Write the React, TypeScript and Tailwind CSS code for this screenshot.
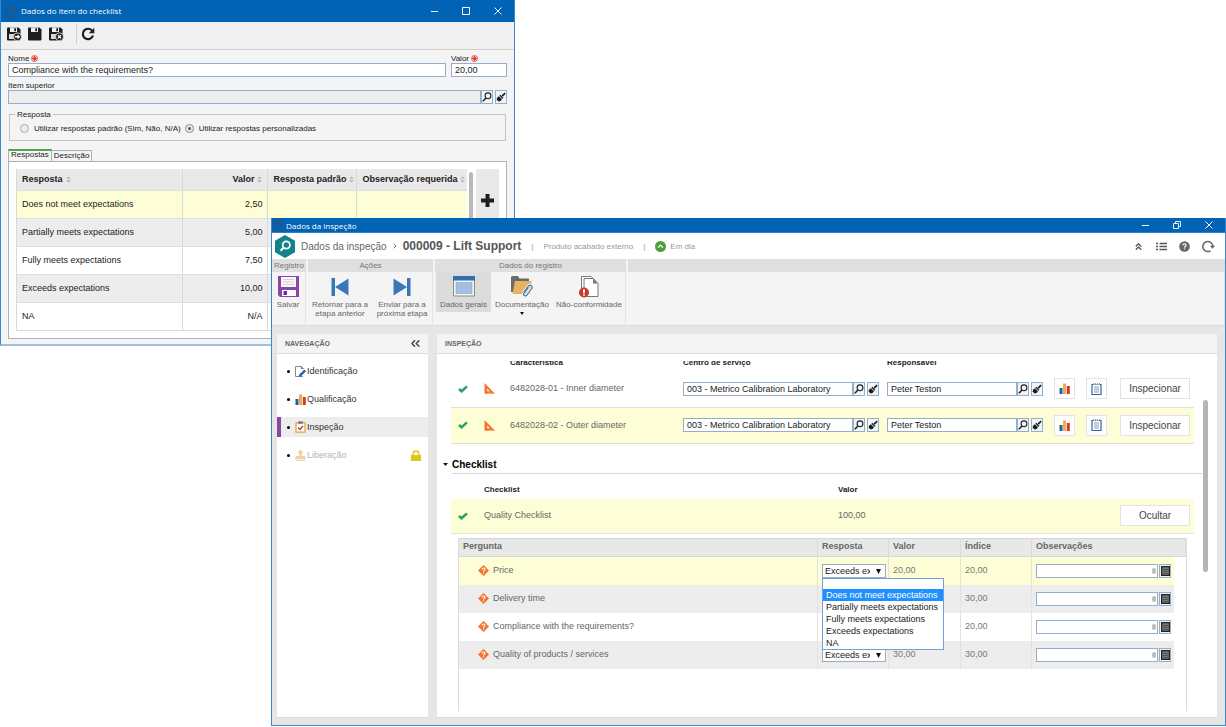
import { ReactNode } from 'react';
import { ChevronsUp, ChevronRight } from 'lucide-react';

const answers = [
  { name: 'Does not meet expectations', value: '2,50' },
  { name: 'Partially meets expectations', value: '5,00' },
  { name: 'Fully meets expectations', value: '7,50' },
  { name: 'Exceeds expectations', value: '10,00' },
  { name: 'NA', value: 'N/A' }
];

const measurements = [
  { name: '6482028-01 - Inner diameter', center: '003 - Metrico Calibration Laboratory', owner: 'Peter Teston' },
  { name: '6482028-02 - Outer diameter', center: '003 - Metrico Calibration Laboratory', owner: 'Peter Teston' }
];

const questions = [
  { name: 'Price', value: '20,00', index: '20,00' },
  { name: 'Delivery time', value: '30,00', index: '30,00' },
  { name: 'Compliance with the requirements?', value: '20,00', index: '20,00' },
  { name: 'Quality of products / services', value: '30,00', index: '30,00' }
];

const rowColors = ['bg-[#fefed6]', 'bg-[#ededed]', 'bg-white', 'bg-[#ededed]', 'bg-white'];

/* ---------- Icons ---------- */

const PageIcon = () => (
  <svg className="w-2 h-[11px] shrink-0" viewBox="0 0 8 11" fill="none" stroke="#3d4f63">
    <path d="M.5.5h4.500l2.500 2.500v7.500h-7zM5 .5V3h2.500" />
  </svg>
);

const FloppyIcon = ({ badge }: { badge?: 'arrow' | 'close' }) => (
  <svg className="w-[15px] h-[14px]" viewBox="0 0 15 14">
    <path d="M0 1.500Q0 .5 1 .5h10.500L13.500 2.500v10q0 1-1 1H1q-1 0-1-1z" fill="#1e1e1e" />
    <path d="M3 .5h7v4.500H3z" fill="#f0f0f0" />
    <path d="M7.300 1.300h1.700v3H7.300z" fill="#1e1e1e" />
    {badge && <path d="M2 7h6v5H2z" fill="#d8d8d8" />}
    {badge && <circle cx="10.500" cy="9.800" r="4" fill="#1e1e1e" stroke="#f0f0f0" strokeWidth=".8" />}
    {badge === 'arrow' && <path d="M8 9h2.500V7.300L13.200 9.800l-2.700 2.500v-1.700H8z" fill="#fff" />}
    {badge === 'close' && <path d="M9 8.300l3 3m0-3l-3 3" stroke="#fff" strokeWidth="1.300" />}
  </svg>
);

const RequiredIcon = () => (
  <svg className="w-[7px] h-[7px]" viewBox="0 0 7 7" fill="none" stroke="#e8352c">
    <circle cx="3.500" cy="3.500" r="3" strokeWidth=".8" />
    <path d="M3.500 1v5M1 3.500h5M1.900 1.900l3.200 3.200M5.100 1.900L1.900 5.100" strokeWidth=".9" />
  </svg>
);

const SearchIcon = () => (
  <svg className="w-[10px] h-[10px]" viewBox="0 0 10 10" fill="none" stroke="#222">
    <circle cx="6" cy="3.800" r="2.900" strokeWidth="1.100" />
    <path d="M4 6L.8 9.200" strokeWidth="1.600" />
  </svg>
);

const BrushIcon = () => (
  <svg className="w-[10px] h-[10px]" viewBox="0 0 10 10" fill="#1c1c1c">
    <path d="M8.600.6l1.100 1.100L6.800 4.800 5.500 3.500z" />
    <path d="M4.300 2.700l3.200 3.200-1 .9L3.400 3.700z" />
    <path d="M2.900 4.200l3.100 3.100Q4.800 9.500 2.600 9.500L.5 7.600Q.8 5 2.900 4.200z" />
  </svg>
);

const SortIcon = () => (
  <svg className="w-[5px] h-[7px] shrink-0" viewBox="0 0 5 7" fill="#b5b5b5">
    <path d="M0 2.800L2.500.5 5 2.800zM0 4.200L2.500 6.500 5 4.200z" />
  </svg>
);

const SaveIcon = () => (
  <svg className="w-[21px] h-[21px]" viewBox="0 0 21 21">
    <path d="M0 0h21v21H2l-2-2z" fill="#8a45a8" />
    <path d="M3 1h15v10H3z" fill="#f7f7f7" />
    <path d="M5 3.500h11M5 6h11M5 8.500h11" stroke="#c9c9c9" strokeWidth=".8" />
    <path d="M4 14h14v6H4z" fill="#fff" />
    <path d="M5.500 15h3.500v4H5.500z" fill="#6d2e8c" />
  </svg>
);

const PreviousIcon = () => (
  <svg className="w-[18px] h-[21px]" viewBox="0 0 18 21" fill="#3a77b6">
    <path d="M.5 2H4v18H.5zM17.500 2.500v17L4 11z" />
  </svg>
);

const NextIcon = () => (
  <svg className="w-[18px] h-[21px]" viewBox="0 0 18 21" fill="#3a77b6">
    <path d="M14 2h3.500v18H14zM.5 2.500v17L14 11z" />
  </svg>
);

const FormIcon = () => (
  <svg className="w-[22px] h-[21px]" viewBox="0 0 22 21">
    <path d="M.5.500h21v19.500H.5z" fill="#f4f4f4" stroke="#8c8c8c" />
    <path d="M0 0h22v4.500H0z" fill="#2f6fb3" />
    <path d="M3 6.500h16v11H3z" fill="#a4bfdf" stroke="#7ea1cb" strokeWidth=".6" />
  </svg>
);

const FolderIcon = () => (
  <svg className="w-[22px] h-[21px]" viewBox="0 0 22 21">
    <path d="M0 1.500Q0 0 1.500 0H7l1.500 2.500H18V16H0z" fill="#6b6b6b" />
    <path d="M4 5h16.500l-1 13H1.500z" fill="#e9b25e" />
    <path d="M12.500 16.500l5-6.500q1.500-1.500 3 0t0 3l-5 6.500q-1 1-2.300 0t-.2-2.300l4.500-5.700" fill="none" stroke="#fff" strokeWidth="2.800" />
    <path d="M12.500 16.500l5-6.500q1.500-1.500 3 0t0 3l-5 6.500q-1 1-2.300 0t-.2-2.300l4.500-5.700" fill="none" stroke="#3a77b6" strokeWidth="1.200" />
  </svg>
);

const NonConformityIcon = () => (
  <svg className="w-[20px] h-[22px]" viewBox="0 0 20 22">
    <path d="M2.500 14V.5h9.500l4 4" fill="#fff" stroke="#777" />
    <path d="M5 20V2.500h9l5 5V20.500H5z" fill="#fff" stroke="#777" />
    <path d="M14 2.500v5h5z" fill="#777" />
    <circle cx="5" cy="16.500" r="5" fill="#c83a26" />
    <path d="M4.100 13.200h1.800v4H4.100zM4.100 18.200h1.800v1.600H4.100z" fill="#fff" />
  </svg>
);

const ChartIcon = () => (
  <svg className="w-[11px] h-[11px] shrink-0" viewBox="0 0 11 11">
    <path d="M.5 5h3v6h-3z" fill="#1d5ea8" />
    <path d="M4 .5h3V11H4z" fill="#eeaa4e" />
    <path d="M7.800 3h3v8h-3z" fill="#cc3d20" />
  </svg>
);

const NotepadIcon = () => (
  <svg className="w-[11px] h-[12px]" viewBox="0 0 11 12">
    <path d="M1 1.500h9v10H1z" fill="#fff" stroke="#2a68ad" strokeWidth="1.200" />
    <path d="M3 3h5v7H3z" fill="#c9ccd2" />
    <path d="M2 .8h7" stroke="#fff" strokeWidth="1.600" />
    <path d="M2 1h7" stroke="#777" strokeWidth="1.400" strokeDasharray="1 1" />
  </svg>
);

const CheckIcon = () => (
  <svg className="w-[10px] h-[8px]" viewBox="0 0 10 8">
    <path d="M1 4l2.600 2.300L9 1.400" fill="none" stroke="#2f9d6e" strokeWidth="2.600" />
  </svg>
);

const SetSquareIcon = () => (
  <svg className="w-[11px] h-[11px]" viewBox="0 0 11 11">
    <path fillRule="evenodd" d="M.5 0L11 10.800H.5zM3.200 5.600v2.700h2.600z" fill="#f2742e" />
    <path d="M4.500 10.800v-.9M6.500 10.800v-.9M8.500 10.800v-.9" stroke="#fff" strokeWidth=".5" />
  </svg>
);

const QuestionIcon = () => (
  <svg className="w-[11px] h-[11px] shrink-0" viewBox="0 0 11 11">
    <path d="M5.500 0L11 5.500 5.500 11 0 5.500z" fill="#f2742e" />
    <path d="M4 4.400Q4 3 5.500 3T7 4.300Q7 5 6.200 5.500T5.500 6.600" fill="none" stroke="#fff" strokeWidth="1.100" />
    <path d="M4.900 7.300h1.200v1.100H4.900z" fill="#fff" />
  </svg>
);

const EditPageIcon = () => (
  <svg className="w-[11px] h-[11px] shrink-0" viewBox="0 0 11 11">
    <path d="M8 10.500H.5V.5H6L8.500 3" fill="none" stroke="#888" />
    <path d="M6 0v3h3z" fill="#777" />
    <path d="M9.300 3.500L11 5.200 6 10.200l-2.300.6.600-2.300z" fill="#1f62b0" />
  </svg>
);

const ClipboardIcon = () => (
  <svg className="w-[11px] h-[12px] shrink-0" viewBox="0 0 11 12">
    <path d="M1 1.800h9v9.400H1z" fill="#fff" stroke="#e0a24a" strokeWidth="1.300" />
    <path d="M3.300.3h4.400v2.500H3.300z" fill="#777" />
    <path d="M3.200 6.500l1.800 2L8 4.800" fill="none" stroke="#c8321e" strokeWidth="1.300" />
  </svg>
);

const StampIcon = () => (
  <svg className="w-[11px] h-[11px] shrink-0" viewBox="0 0 11 11" fill="#f1d2a4">
    <circle cx="5.500" cy="2.200" r="2.200" />
    <path d="M4.500 4h2v2h3.200q1.300.3 1.300 3H0q0-2.700 1.300-3h3.200zM.8 9.700h9.400v1.300H.8z" />
  </svg>
);

const LockIcon = () => (
  <svg className="w-[10px] h-[11px]" viewBox="0 0 10 11">
    <path d="M2.200 5.500V3.500Q2.200 1 5 1t2.800 2.500v2" fill="none" stroke="#e0c70e" strokeWidth="1.500" />
    <path d="M0 5h10v6H0z" fill="#e0c70e" />
  </svg>
);

/* ---------- Shared controls ---------- */

const inputClass = 'block min-w-0 h-3.5 border border-[#93afca] px-[3px] text-[9px] leading-3 text-[#222]';

const radioClass =
  'appearance-none size-[9px] rounded-full border border-[#aaa] bg-[#ececec] checked:bg-[#555] checked:shadow-[inset_0_0_0_2px_#ececec]';

const SmallButton = ({ label, children }: { label: string; children: ReactNode }) => (
  <button aria-label={label} className="w-3 h-3.5 shrink-0 border border-[#93afca] bg-[#f1f4f8] flex items-center justify-center">
    {children}
  </button>
);

const Lookup = ({ label, value, disabled }: { label: string; value?: string; disabled?: boolean }) => (
  <div className="flex">
    <input
      aria-label={label}
      defaultValue={value}
      disabled={disabled}
      className={`${inputClass} flex-1 ${disabled ? 'bg-[#ededed]' : 'bg-white'}`}
    />
    <SmallButton label={`${label}: pesquisar`}><SearchIcon /></SmallButton>
    <div className="w-0.5" />
    <SmallButton label={`${label}: limpar`}><BrushIcon /></SmallButton>
  </div>
);

const WindowButtons = ({ restore }: { restore?: boolean }) => (
  <div className="flex items-center gap-6 mr-3">
    <button aria-label="Minimizar">
      <svg className="w-[7px] h-2" viewBox="0 0 7 8"><path d="M0 4.500h7" stroke="#fff" /></svg>
    </button>
    <button aria-label={restore ? 'Restaurar' : 'Maximizar'}>
      <svg className="w-2 h-2" viewBox="0 0 8 8" fill="none" stroke="#fff">
        {restore ? <path d="M.5 2.500h5v5h-5zM2.500 2V.5h5v5H6" strokeWidth=".9" /> : <path d="M.5.5h7v7h-7z" />}
      </svg>
    </button>
    <button aria-label="Fechar">
      <svg className="w-2 h-2" viewBox="0 0 8 8"><path d="M.5.5l7 7m0-7l-7 7" stroke="#fff" /></svg>
    </button>
  </div>
);

/* ---------- Checklist item window ---------- */

const HeaderCell = ({ label, right }: { label: string; right?: boolean }) => (
  <th className="border-r border-[#d9d9d9] px-[5px] font-bold last:border-r-0">
    <div className={`flex items-center gap-[3px] whitespace-nowrap ${right ? 'justify-end' : ''}`}>
      {label}
      <SortIcon />
    </div>
  </th>
);

const ItemWindow = () => (
  <section className="absolute left-0 top-0 w-[42%] bg-[#f4f4f4] border-x border-b-2 border-x-[#3c87c9] border-b-[#9cc1e4] text-[#222]">
    <div className="h-[22px] bg-[#0063b5] flex items-center justify-between pl-1.5">
      <div className="flex items-center gap-1.5 font-['Open_Sans',sans-serif] text-[8px] text-white">
        <PageIcon />
        <h1>Dados do item do checklist</h1>
      </div>
      <WindowButtons />
    </div>

    <div className="h-7 bg-[#f0f0f0] border-b border-[#cfcfcf] flex items-center pl-1.5 pb-1">
      <button aria-label="Salvar e sair"><FloppyIcon badge="arrow" /></button>
      <button aria-label="Salvar" className="ml-1.5"><FloppyIcon /></button>
      <button aria-label="Salvar e novo" className="ml-1.5"><FloppyIcon badge="close" /></button>
      <div className="w-px h-5 bg-[#cfcfcf] ml-3 mr-1" />
      <button aria-label="Atualizar">
        <svg className="w-[14px] h-[14px]" viewBox="0 0 14 14">
          <path d="M11 3.600A5.200 5.200 0 1 0 12 8.500" fill="none" stroke="#1e1e1e" strokeWidth="2.200" />
          <path d="M13.300.8v5.500H7.800z" fill="#1e1e1e" />
        </svg>
      </button>
    </div>

    <div className="px-[7px] pt-1 pb-[5px] text-[8px] leading-[9px]">
      <div className="flex gap-[5px]">
        <div className="flex-1">
          <label htmlFor="item-name" className="flex items-center gap-0.5">Nome <RequiredIcon /></label>
          <input id="item-name" defaultValue="Compliance with the requirements?" className={`${inputClass} w-full bg-white`} />
        </div>
        <div className="w-14">
          <label htmlFor="item-value" className="flex items-center gap-0.5">Valor <RequiredIcon /></label>
          <input id="item-value" defaultValue="20,00" className={`${inputClass} w-full bg-white`} />
        </div>
      </div>

      <p className="mt-1">Item superior</p>
      <Lookup label="Item superior" disabled />

      <fieldset className="mt-1.5 mx-px h-[31px] border border-[#c3c3c3] px-2.5">
        <legend className="px-0.5 ml-[-5px]">Resposta</legend>
        <div className="flex items-center h-[18px] gap-1">
          <label className="flex items-center gap-[5px] whitespace-nowrap">
            <input type="radio" name="answer-mode" className={radioClass} />
            Utilizar respostas padrão (Sim, Não, N/A)
          </label>
          <label className="flex items-center gap-[5px] whitespace-nowrap">
            <input type="radio" name="answer-mode" defaultChecked className={radioClass} />
            Utilizar respostas personalizadas
          </label>
        </div>
      </fieldset>

      <div role="tablist" className="flex items-end mt-2">
        <button role="tab" aria-selected="true" className="h-3 border-x border-t-2 border-x-[#a9b3b3] border-t-[#4ca64c] bg-[#f7f7f7] px-0.5 pb-0.5 leading-2">
          Respostas
        </button>
        <button role="tab" aria-selected="false" className="h-[11px] border-r border-t border-[#a9b3b3] px-0.5 leading-2">
          Descrição
        </button>
      </div>

      <div className="border border-[#a9b3b3] bg-white flex p-[7px] text-[9px]">
        <div className="flex-1">
          <table className="w-full border-collapse table-fixed border-l border-b border-[#d9d9d9]">
            <colgroup>
              <col />
              <col className="w-[85px]" />
              <col className="w-[89px]" />
              <col className="w-[110px]" />
            </colgroup>
            <thead>
              <tr className="h-[21px] bg-[#e9e9e9] text-left">
                <HeaderCell label="Resposta" />
                <HeaderCell label="Valor" right />
                <HeaderCell label="Resposta padrão" />
                <HeaderCell label="Observação requerida" />
              </tr>
            </thead>
            <tbody>
              {answers.map((answer, index) => (
                <tr key={answer.name} className={`h-7 border-t border-[#dedede] ${rowColors[index]}`}>
                  <td className="border-r border-[#d9d9d9] px-[5px]">{answer.name}</td>
                  <td className="border-r border-[#d9d9d9] px-[5px] text-right">{answer.value}</td>
                  <td className="border-r border-[#d9d9d9]"></td>
                  <td></td>
                </tr>
              ))}
            </tbody>
          </table>
        </div>
        <div className="w-1 ml-0.5 mt-[3px] rounded bg-[#b9b9b9]" />
        <div className="w-[23px] ml-[3px] bg-[#e9e9e9] pt-[25px] text-center">
          <button aria-label="Adicionar resposta">
            <svg className="w-[13px] h-[13px]" viewBox="0 0 13 13"><path d="M6.500 0v13M0 6.500h13" stroke="#1e1e1e" strokeWidth="4" /></svg>
          </button>
        </div>
      </div>
    </div>
  </section>
);

/* ---------- Inspection window ---------- */

const RibbonGroup = ({ title, className, children }: { title?: string; className: string; children?: ReactNode }) => (
  <div className={`flex flex-col ${className}`}>
    <h2 className="h-[13px] bg-[#dfdfdf] text-center text-[#777] leading-[13px]">{title}</h2>
    <div className="flex flex-1 border-r border-[#e2e2e2]">{children}</div>
  </div>
);

const RibbonButton = ({ icon, className, children }: { icon: ReactNode; className: string; children: ReactNode }) => (
  <button className={`flex flex-col items-center pt-1 ${className}`}>
    <span className="h-[22px]">{icon}</span>
    <span className="mt-0.5 whitespace-nowrap">{children}</span>
  </button>
);

const NavItem = ({ icon, label, active, locked }: { icon: ReactNode; label: string; active?: boolean; locked?: boolean }) => (
  <li className="h-7 py-1">
    <a
      href="#"
      className={`h-full flex items-center pr-[7px] border-l-4 ${active ? 'border-[#8a45a8] bg-[#ededed]' : 'border-transparent'} ${locked ? 'text-[#b5b5b5]' : 'text-[#333]'}`}
    >
      <span className="w-[3px] h-[3px] rounded-full bg-black ml-1.5 mr-[5px]" />
      {icon}
      <span className="ml-px flex-1">{label}</span>
      {locked && <LockIcon />}
    </a>
  </li>
);

const AnswerSelect = ({ question, open }: { question: string; open?: boolean }) => (
  <div className="relative">
    <select
      aria-label={`Resposta para ${question}`}
      defaultValue="Exceeds expectations"
      className="block appearance-none w-16 h-3.5 border border-[#93afca] bg-white pl-0.5 pr-[15px] text-[9px] leading-3 text-[#222]"
    >
      {answers.map((answer) => (
        <option key={answer.name}>{answer.name}</option>
      ))}
    </select>
    <svg className="absolute left-[54px] top-[5px] w-[5px] h-[5px] pointer-events-none" viewBox="0 0 5 5"><path d="M0 0h5L2.500 5z" fill="#111" /></svg>
    {open && (
      <ul role="listbox" className="absolute left-0 top-3.5 z-10 w-[122px] border border-[#6f9fdc] bg-white pt-2.5 text-[9px] leading-3 text-[#222]">
        {answers.map((answer, index) => (
          <li
            key={answer.name}
            role="option"
            aria-selected={index === 0}
            className={`px-[3px] whitespace-nowrap ${index === 0 ? 'bg-[#1e90ff] text-white' : ''}`}
          >
            {answer.name}
          </li>
        ))}
      </ul>
    )}
  </div>
);

const MeasurementTable = () => (
  <table className="w-full table-fixed border-collapse text-[#666]">
    <colgroup>
      <col className="w-[33px]" />
      <col className="w-[26px]" />
      <col />
      <col className="w-[204px]" />
      <col className="w-[167px]" />
      <col className="w-[32px]" />
      <col className="w-[34px]" />
      <col className="w-[74px]" />
    </colgroup>
    <thead>
      <tr className="h-[18px] text-left text-[8px] leading-[9px] text-[#222]">
        <th></th>
        <th></th>
        <th>Característica</th>
        <th>Centro de serviço</th>
        <th>Responsável</th>
        <th></th>
        <th></th>
        <th></th>
      </tr>
    </thead>
    <tbody>
      {measurements.map((item, index) => (
        <tr key={item.name} className={`h-9 border-b border-[#e0e0e0] ${index === 1 ? 'bg-[#fefed6]' : ''}`}>
          <td className="pl-[7px]"><CheckIcon /></td>
          <td><SetSquareIcon /></td>
          <td>{item.name}</td>
          <td className="pr-2"><Lookup label="Centro de serviço" value={item.center} /></td>
          <td className="pr-[11px]"><Lookup label="Responsável" value={item.owner} /></td>
          <td>
            <button aria-label="Gráfico" className="size-[21px] border border-[#e3e3e3] bg-white flex items-center justify-center"><ChartIcon /></button>
          </td>
          <td>
            <button aria-label="Anotações" className="size-[21px] border border-[#e3e3e3] bg-white flex items-center justify-center"><NotepadIcon /></button>
          </td>
          <td className="pr-1">
            <button className="w-full h-[21px] border border-[#e3e3e3] bg-white text-[10px] text-[#444]">Inspecionar</button>
          </td>
        </tr>
      ))}
    </tbody>
  </table>
);

const QuestionTable = () => (
  <table className="w-full table-fixed border-collapse text-[#777]">
    <colgroup>
      <col />
      <col className="w-[71px]" />
      <col className="w-[72px]" />
      <col className="w-[71px]" />
      <col className="w-[143px]" />
      <col className="w-[11px]" />
    </colgroup>
    <thead>
      <tr className="h-[18px] bg-[#e8e8e8] border-y border-[#d6d6d6] text-left text-[#666] [&>th]:pl-1 [&>th]:pb-0.5 [&>th]:border-r [&>th]:border-[#dcdcdc]">
        <th>Pergunta</th>
        <th>Resposta</th>
        <th>Valor</th>
        <th>Índice</th>
        <th colSpan={2}>Observações</th>
      </tr>
    </thead>
    <tbody>
      {questions.map((question, index) => (
        <tr key={question.name} className={`h-7 [&>td]:pl-1 ${rowColors[index]}`}>
          <td className="border-r border-[#e2e2e2]">
            <div className="flex items-center gap-1 pl-[15px] text-[#666]">
              <QuestionIcon />
              {question.name}
            </div>
          </td>
          <td className="border-r border-[#e2e2e2]"><AnswerSelect question={question.name} open={index === 0} /></td>
          <td className="border-r border-[#e2e2e2]">{question.value}</td>
          <td className="border-r border-[#e2e2e2]">{question.index}</td>
          <td>
            <div className="flex pr-[3px]">
              <div className="relative flex-1 mr-px">
                <input aria-label={`Observações de ${question.name}`} className={`${inputClass} w-full bg-white`} />
                <span className="absolute right-0.5 top-1 w-1 h-1.5 rounded-sm bg-[#bdbdbd]" />
              </div>
              <SmallButton label="Editar observações">
                <svg className="w-[9px] h-[10px]" viewBox="0 0 9 10">
                  <path d="M.5.5h8v9h-8z" fill="#777" stroke="#222" strokeWidth="1.400" />
                  <path d="M2 3.500h5M2 5.500h5M2 7.500h5" stroke="#444" strokeWidth=".7" />
                </svg>
              </SmallButton>
            </div>
          </td>
          <td className="bg-white"></td>
        </tr>
      ))}
    </tbody>
  </table>
);

const InspectionWindow = () => (
  <section className="relative ml-[271px] mt-[218px] mb-px flex-1 flex flex-col border-x border-b border-[#3c87c9] bg-[#e6e6e6] text-[9px] leading-[11px]">
    <div className="h-[15px] bg-[#0063b5] border-b border-[#2f7fd0] flex items-center justify-between pl-0.5">
      <div className="flex items-center gap-1 font-['Open_Sans',sans-serif] text-[8px] text-white">
        <PageIcon />
        <h1>Dados da inspeção</h1>
      </div>
      <WindowButtons restore />
    </div>

    <header className="h-[26px] bg-white flex items-center pl-[3px] pr-2.5 text-[8px] text-[#999]">
      <svg className="w-5 h-[23px]" viewBox="0 0 20 23">
        <path d="M10 0l10 5.700v11.600L10 23 0 17.300V5.700z" fill="#12838a" />
        <circle cx="11.300" cy="10" r="3.600" fill="none" stroke="#fff" strokeWidth="1.700" />
        <path d="M8.800 12.500L5.600 15.700" stroke="#fff" strokeWidth="2" />
      </svg>
      <span className="ml-1.5 text-[10px] text-[#666]">Dados da inspeção</span>
      <ChevronRight className="size-2 mx-1 text-[#777]" strokeWidth={3} />
      <span className="text-xs font-bold text-[#555]">000009 - Lift Support</span>
      <span className="mx-2.5">|</span>
      <span>Produto acabado externo</span>
      <span className="mx-2.5">|</span>
      <svg className="w-[11px] h-[11px] mr-1" viewBox="0 0 11 11">
        <circle cx="5.500" cy="5.500" r="5.500" fill="#4ba03c" />
        <path d="M3 6.700l2.500-2.500L8 6.700" fill="none" stroke="#fff" strokeWidth="1.200" />
      </svg>
      <span className="flex-1">Em dia</span>
      <div className="flex items-center gap-3 text-[#555]">
        <button aria-label="Recolher"><ChevronsUp className="size-[11px]" strokeWidth={3} /></button>
        <button aria-label="Lista">
          <svg className="w-[11px] h-[9px]" viewBox="0 0 11 9"><path d="M0 1.500h2M0 4.500h2M0 7.500h2M3.500 1.500H11M3.500 4.500H11M3.500 7.500H11" stroke="#555" strokeWidth="1.300" /></svg>
        </button>
        <button aria-label="Ajuda">
          <svg className="w-[11px] h-[11px]" viewBox="0 0 11 11">
            <circle cx="5.500" cy="5.500" r="5.300" fill="#666" />
            <path d="M3.900 4.300Q3.900 2.800 5.500 2.800T7.100 4.200Q7.100 5 6.300 5.500T5.500 6.700M5.500 7.400v1.200" fill="none" stroke="#fff" strokeWidth="1.200" />
          </svg>
        </button>
        <button aria-label="Atualizar">
          <svg className="w-[13px] h-[13px]" viewBox="0 0 13 13">
            <path d="M8.500 10.800A5 5 0 1 1 10.800 6" fill="none" stroke="#666" strokeWidth="1.500" />
            <path d="M8 5.800h5L10.500 8.800z" fill="#666" />
          </svg>
        </button>
      </div>
    </header>

    <div className="h-[67px] bg-[#f4f4f4] border-b border-[#dcdcdc] flex gap-0.5 text-[8px] leading-[9px] text-[#666]">
      <RibbonGroup title="Registro" className="w-[34px]">
        <RibbonButton icon={<SaveIcon />} className="w-8">Salvar</RibbonButton>
      </RibbonGroup>
      <RibbonGroup title="Ações" className="w-[125px]">
        <RibbonButton icon={<PreviousIcon />} className="w-16">Retornar para a<br />etapa anterior</RibbonButton>
        <RibbonButton icon={<NextIcon />} className="w-[60px]">Enviar para a<br />próxima etapa</RibbonButton>
      </RibbonGroup>
      <RibbonGroup title="Dados do registro" className="w-[191px]">
        <RibbonButton icon={<FormIcon />} className="w-[55px] h-10 ml-px bg-[#dcdcdc]">Dados gerais</RibbonButton>
        <RibbonButton icon={<FolderIcon />} className="w-[62px]">
          Documentação
          <svg className="w-1 h-[3px] mx-auto mt-[3px]" viewBox="0 0 4 3"><path d="M0 0h4L2 3z" fill="#111" /></svg>
        </RibbonButton>
        <RibbonButton icon={<NonConformityIcon />} className="w-[72px]">Não-conformidade</RibbonButton>
      </RibbonGroup>
      <RibbonGroup className="flex-1" />
    </div>

    <div className="flex flex-1 gap-[9px] pl-[5px] pr-2 pt-2 pb-[7px]">
      <nav className="w-[151px] shrink-0 bg-white border-b border-[#dcdcdc]">
        <div className="h-5 bg-[#f4f4f4] border-b border-[#dcdcdc] flex items-center justify-between px-2">
          <h2 className="text-[7px] font-bold text-[#666]">NAVEGAÇÃO</h2>
          <button aria-label="Recolher navegação">
            <svg className="w-[9px] h-[7px]" viewBox="0 0 9 7" fill="none" stroke="#444" strokeWidth="1.500"><path d="M4 .3L1 3.500l3 3.200M8.300.3l-3 3.200 3 3.200" /></svg>
          </button>
        </div>
        <ul className="pt-[3px]">
          <NavItem icon={<EditPageIcon />} label="Identificação" />
          <NavItem icon={<ChartIcon />} label="Qualificação" />
          <NavItem icon={<ClipboardIcon />} label="Inspeção" active />
          <NavItem icon={<StampIcon />} label="Liberação" locked />
        </ul>
      </nav>

      <main className="flex-1 flex flex-col bg-white border-b border-[#dcdcdc]">
        <div className="h-5 bg-[#f4f4f4] border-b border-[#dcdcdc] flex items-center px-2">
          <h2 className="text-[7px] font-bold text-[#666]">INSPEÇÃO</h2>
        </div>
        {/* List is scrolled down a little, so its first header row is partly hidden */}
        <div className="flex flex-1 mt-[7px] mb-1.5 overflow-hidden">
          <div className="flex-1 flex flex-col -mt-2">
            <div className="ml-3.5 mr-2">
              <MeasurementTable />
            </div>

            <div className="flex items-center h-[29px] pt-[13px] ml-1.5 gap-1">
              <svg className="w-[5px] h-[3px]" viewBox="0 0 5 3"><path d="M0 0h5L2.500 3z" fill="#111" /></svg>
              <h3 className="text-[10px] font-bold text-black">Checklist</h3>
            </div>
            <div className="h-px bg-[#d6d6d6] ml-[15px]" />

            <div className="ml-3.5 mr-2">
              <table className="w-full table-fixed border-collapse text-[#666]">
                <colgroup>
                  <col className="w-[33px]" />
                  <col />
                  <col className="w-[282px]" />
                  <col className="w-[74px]" />
                </colgroup>
                <thead>
                  <tr className="h-[25px] text-left text-[8px] text-[#222]">
                    <th></th>
                    <th className="pt-1.5">Checklist</th>
                    <th className="pt-1.5">Valor</th>
                    <th></th>
                  </tr>
                </thead>
                <tbody>
                  <tr className="h-[35px] bg-[#fefed6] border-b border-[#e0e0e0]">
                    <td className="pl-[7px]"><CheckIcon /></td>
                    <td>Quality Checklist</td>
                    <td>100,00</td>
                    <td className="pr-1">
                      <button className="w-full h-[21px] border border-[#e3e3e3] bg-white text-[10px] text-[#444]">Ocultar</button>
                    </td>
                  </tr>
                </tbody>
              </table>
            </div>

            <div className="flex-1 mt-1 ml-[21px] mr-[15px] border-x border-[#dcdcdc]">
              <QuestionTable />
            </div>
          </div>
          <div className="w-[5px] h-[172px] mt-[39px] ml-px mr-[9px] rounded bg-[#b5b5b5]" />
        </div>
      </main>
    </div>
  </section>
);

export default function App() {
  return (
    <div className="relative min-h-screen flex flex-col overflow-hidden bg-white font-['Liberation_Sans',Arial,sans-serif]">
      <ItemWindow />
      <InspectionWindow />
    </div>
  );
}
